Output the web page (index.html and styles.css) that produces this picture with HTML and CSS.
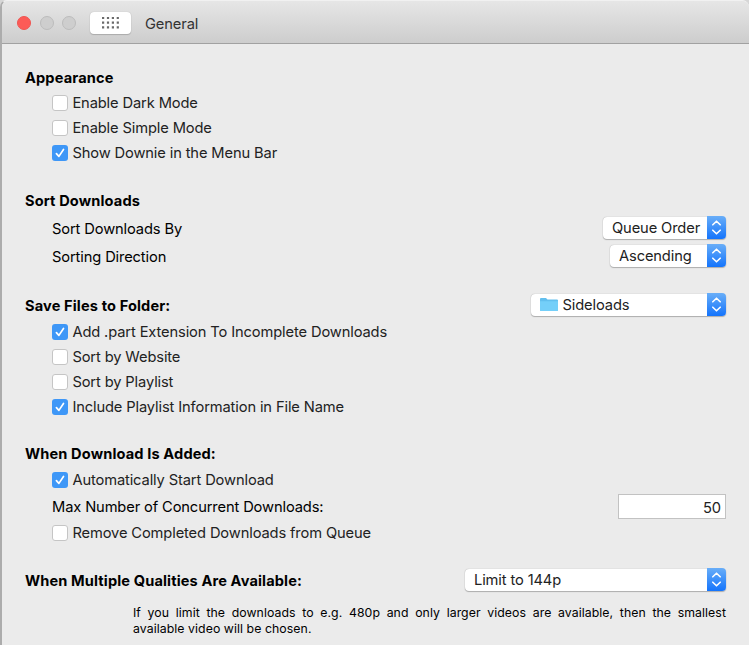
FILE: index.html
```
<!DOCTYPE html>
<html lang="en">
<head>
<meta charset="utf-8">
<title>General</title>
<link rel="stylesheet" href="styles.css">
</head>
<body>
<svg width="0" height="0" class="defs">
  <symbol id="check" viewBox="0 0 16 16"><path d="M4.4 8.6 6.9 11.4 11.5 4.5" fill="none" stroke="#fff" stroke-width="1.7" stroke-linecap="round" stroke-linejoin="round"/></symbol>
  <symbol id="arrows" viewBox="0 0 19 23"><path d="M5.8 8.8 9.5 5.2 13.2 8.8M5.8 14.2 9.5 17.8 13.2 14.2" fill="none" stroke="#fff" stroke-width="1.6" stroke-linecap="round" stroke-linejoin="round"/></symbol>
</svg>
<div class="window">
  <header class="titlebar">
    <span class="light close"></span><span class="light"></span><span class="light"></span>
    <span class="grid-button">
      <svg width="17" height="12" viewBox="0 0 17 12"><path d="M0 1h17M0 5.7h17M0 10.4h17" stroke="#6a6a6a" stroke-width="2.2" stroke-dasharray="2.2 2.7"/></svg>
    </span>
    <h1>General</h1>
  </header>
  <main>
    <section class="appearance">
      <h2>Appearance</h2>
      <label class="option"><i class="box"></i><span>Enable Dark Mode</span></label>
      <label class="option"><i class="box"></i><span>Enable Simple Mode</span></label>
      <label class="option"><i class="box on"><svg><use href="#check"/></svg></i><span>Show Downie in the Menu Bar</span></label>
    </section>
    <section class="sort">
      <h2>Sort Downloads</h2>
      <div class="field"><span>Sort Downloads By</span><div class="select queue"><span>Queue Order</span><b><svg><use href="#arrows"/></svg></b></div></div>
      <div class="field"><span>Sorting Direction</span><div class="select ascending"><span>Ascending</span><b><svg><use href="#arrows"/></svg></b></div></div>
    </section>
    <section class="save">
      <div class="heading-row"><h2>Save Files to Folder:</h2>
        <div class="select folder"><svg class="folder-icon" viewBox="0 0 18 15"><path d="M0 2Q0 1 1 1H6L7.5 2.5H17Q18 2.5 18 3.5V13Q18 14 17 14H1Q0 14 0 13Z" fill="#62bfee"/><path d="M0 4.2H18V13Q18 14 17 14H1Q0 14 0 13Z" fill="#74cff9"/></svg><span>Sideloads</span><b><svg><use href="#arrows"/></svg></b></div></div>
      <label class="option"><i class="box on"><svg><use href="#check"/></svg></i><span>Add .part Extension To Incomplete Downloads</span></label>
      <label class="option"><i class="box"></i><span>Sort by Website</span></label>
      <label class="option"><i class="box"></i><span>Sort by Playlist</span></label>
      <label class="option"><i class="box on"><svg><use href="#check"/></svg></i><span>Include Playlist Information in File Name</span></label>
    </section>
    <section class="added">
      <h2>When Download Is Added:</h2>
      <label class="option"><i class="box on"><svg><use href="#check"/></svg></i><span>Automatically Start Download</span></label>
      <div class="field"><span>Max Number of Concurrent Downloads:</span><div class="number">50</div></div>
      <label class="option"><i class="box"></i><span>Remove Completed Downloads from Queue</span></label>
    </section>
    <section class="quality">
      <div class="heading-row"><h2>When Multiple Qualities Are Available:</h2>
        <div class="select limit"><span>Limit to 144p</span><b><svg><use href="#arrows"/></svg></b></div></div>
      <p><span class="full-line">If you limit the downloads to e.g. 480p and only larger videos are available, then the smallest</span> available video will be chosen.</p>
    </section>
  </main>
</div>
</body>
</html>
```
FILE: styles.css
```
* { box-sizing: border-box; }
body { margin: 0; height: 645px; overflow: hidden; background: #d6d6d6; font-family: Inter, "Liberation Sans", sans-serif; font-size: 14.7px; letter-spacing: -0.13px; color: #222; }
.defs { display: block; }
.window { height: 645px; border-left: 2px solid #acacac; border-top: 1px solid #f1f1f1; border-radius: 7px 7px 0 0; background: #ebebeb; overflow: hidden; }
.titlebar { height: 43px; display: flex; align-items: center; padding: 0 0 0 15px; border-bottom: 1px solid #a1a1a1; background: linear-gradient(#e6e6e6, #cdcdcd); }
.light { width: 14px; height: 14px; margin: 1px 8.5px 0 0; border-radius: 50%; background: #cecece; border: 1px solid #bcbcbc; }
.close { background: #fc5b57; border-color: #ef5551; }
.grid-button { width: 41px; height: 22px; margin: 1px 0 0 5.5px; border-radius: 4px; background: #fff; box-shadow: 0 0 1px #aaa, 0 1px 1px #aaa; display: flex; align-items: center; justify-content: center; }
h1 { margin: 3px 0 0 14px; font-size: 14.7px; font-weight: 400; line-height: 20px; color: #333; }
main { padding: 20px 23px 0 23px; }
section { margin-bottom: 22px; }
h2 { margin: 0; height: 26px; line-height: 29px; font-size: 14.6px; font-weight: 700; letter-spacing: 0.13px; color: #000; white-space: nowrap; }
.option, .field { margin-left: 27px; display: flex; align-items: center; white-space: nowrap; }
.option { height: 25px; }
.option span { padding-top: 1px; }
.field { height: 28px; justify-content: space-between; color: #000; }
.field > span { padding-top: 2px; }
.box { width: 16px; height: 16px; margin-right: 4.4px; flex: none; border-radius: 3px; background: #fff; border: 1px solid #c5c5c5; }
.on { border: 0; background: #3e97f7; }
.box svg { display: block; width: 16px; height: 16px; }
.select { height: 22px; display: flex; align-items: center; border-radius: 4px; background: #fff; box-shadow: 0 0 1px #999, 0 1px 1px #b0b0b0; padding-left: 9px; color: #222; }
.select > span { padding-top: 1px; }
.select b { width: 19px; height: 23px; margin-left: auto; border-radius: 0 4px 4px 0; background: linear-gradient(#69aef8, #1474fc); }
.select b svg { display: block; width: 19px; height: 23px; }
.sort h2 { height: 27px; }
.sort .select { margin-top: -1px; }
.sort { margin-bottom: 20px; }
.queue { width: 123px; }
.ascending { width: 116px; }
.folder { width: 195px; }
.folder-icon { width: 18px; height: 15px; margin-right: 4.5px; }
.limit { width: 261px; }
.heading-row { display: flex; align-items: center; justify-content: space-between; height: 29px; }
.save { margin-bottom: 21px; }
.added { margin-bottom: 19px; }
.added h2 { height: 27px; line-height: 28px; }
.quality .heading-row { height: 30px; margin-top: 20px; }
.quality .select { margin-top: -1px; }
.number { width: 108px; height: 25px; border: 1px solid #c2c2c2; background: #fff; text-align: right; line-height: 26px; padding-right: 4px; color: #222; }
p { margin: 10px 0 0 108px; width: 593px; font-size: 12.3px; line-height: 16px; letter-spacing: 0.06px; color: #000; }
.full-line { display: block; text-align: justify; text-align-last: justify; white-space: nowrap; }
```
